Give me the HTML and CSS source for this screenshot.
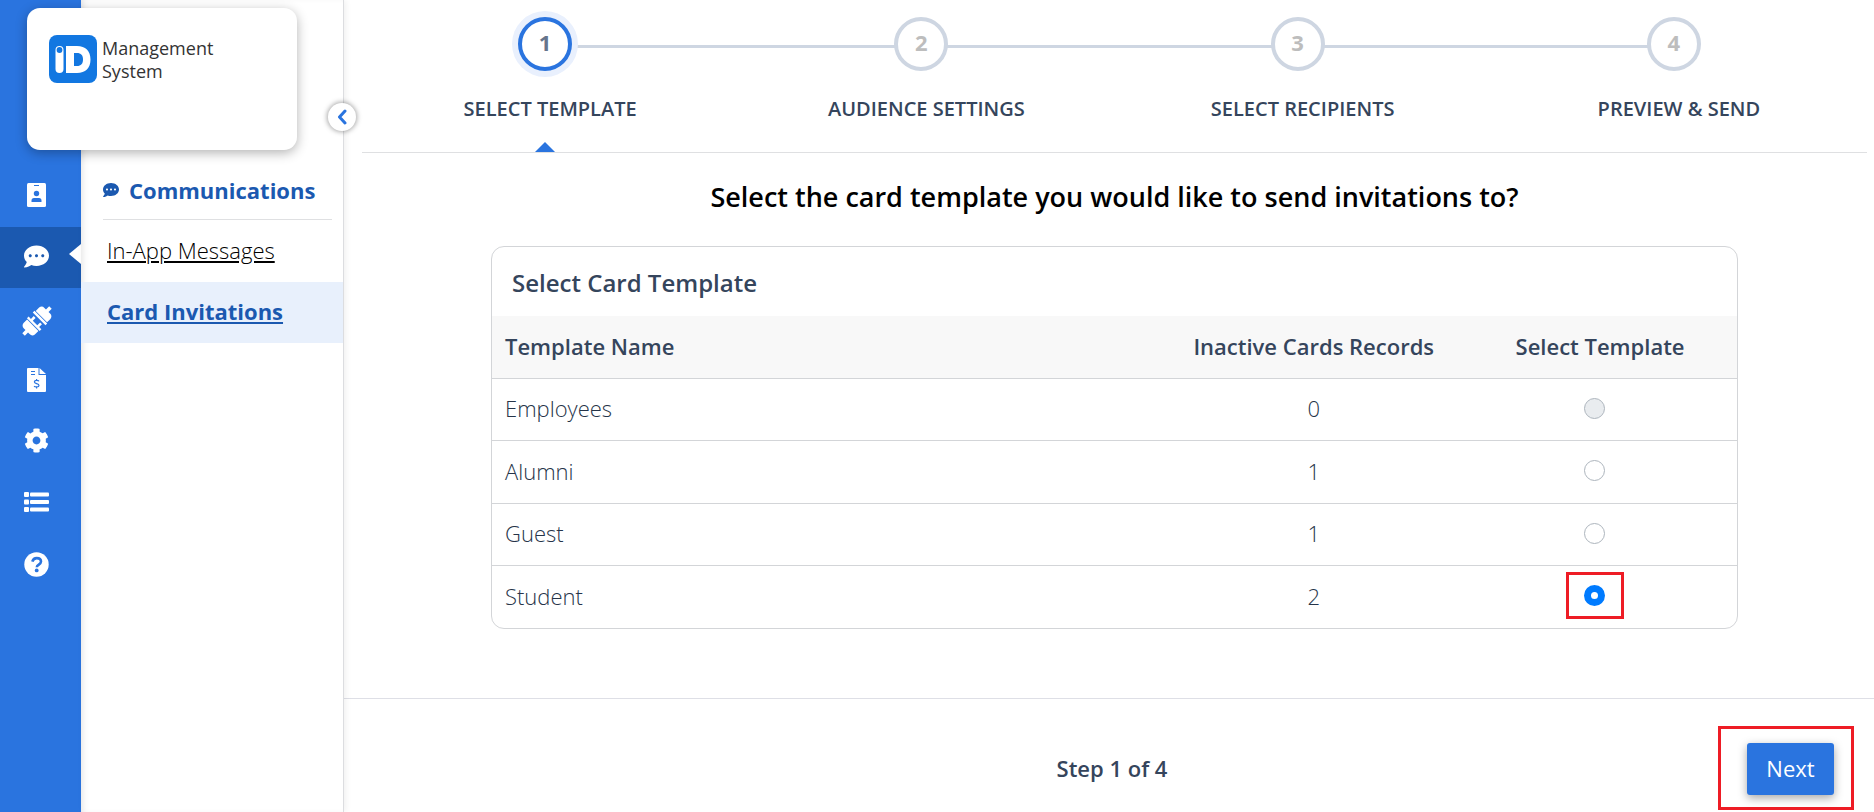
FILE: index.html
```html
<!DOCTYPE html>
<html lang="en">
<head>
<meta charset="utf-8">
<title>Card Invitations</title>
<meta name="viewport" content="width=device-width, initial-scale=1">
<link rel="stylesheet" href="styles.css">
</head>
<body>
<div class="app">
  <nav class="rail" aria-label="Main">
    <a class="rail-item raised" href="#cards" aria-label="Cards">
      <svg width="19" height="24" viewBox="0 0 19 24"><rect width="19" height="24" rx="1.500" fill="currentColor"/><path fill="#2a74df" d="M7 2h5v1H7zM4.500 19v-1.500q0-2.500 2.500-2.500h5q2.500 0 2.500 2.500V19z"/><circle cx="9.500" cy="10.500" r="2.700" fill="#2a74df"/></svg>
    </a>
    <a class="rail-item raised active" href="#communications" aria-label="Communications">
      <svg width="25" height="25" viewBox="0 0 512 512"><path fill="currentColor" d="M256 32C114.600 32 0 125.100 0 240c0 49.600 21.400 95 57 130.700C44.500 421.100 2.700 466 2.200 466.500c-2.200 2.300-2.800 5.700-1.500 8.700S4.800 480 8 480c66.300 0 116-31.800 140.600-51.400 32.700 12.300 69 19.400 107.400 19.400 141.400 0 256-93.100 256-208S397.400 32 256 32zM128 272c-17.700 0-32-14.300-32-32s14.300-32 32-32 32 14.300 32 32-14.300 32-32 32zm128 0c-17.700 0-32-14.300-32-32s14.300-32 32-32 32 14.300 32 32-14.300 32-32 32zm128 0c-17.700 0-32-14.300-32-32s14.300-32 32-32 32 14.300 32 32-14.300 32-32 32z"/></svg>
    </a>
    <a class="rail-item" href="#integrations" aria-label="Integrations">
      <svg width="30" height="34" viewBox="0 -4 30 34"><g transform="rotate(-45 15 15)" fill="currentColor"><path d="M-4 13.200H.500V11q0-3.500 3.500-4h5v16H4q-3.500-.500-3.500-4v-2.200H-4zM9.800 6h2.400v3.200h4v2.600h-4v6.400h4v2.600h-4V24H9.800zM18 6h2.400v18H18zM21.200 7H26q3.500.500 3.500 4v2.200H34v3.600h-4.500V19q0 3.500-3.500 4h-4.800z"/></g></svg>
    </a>
    <a class="rail-item" href="#billing" aria-label="Billing">
      <svg width="19" height="24" viewBox="0 0 19 24"><path fill="currentColor" d="M1 0h10.500v7H19v16q0 1-1 1H1q-1 0-1-1V1q0-1 1-1zM12.500 0 19 6H12.500z"/><path stroke="#2a74df" stroke-width="1.200" fill="none" d="M4 3.500h4M4 6.500h4M12 13.200c-.6-1-4.500-1.400-4.600.7 0 2 4.600 1.400 4.600 3.500 0 2-4.100 1.900-4.900.7M9.600 12.800v-1.700M9.600 20.500v-1.700"/></svg>
    </a>
    <a class="rail-item" href="#settings" aria-label="Settings">
      <svg width="25" height="25" viewBox="0 0 512 512"><path fill="currentColor" d="M487.400 315.700l-42.600-24.600c4.300-23.200 4.300-47 0-70.200l42.600-24.600c4.900-2.800 7.100-8.600 5.500-14-11.100-35.600-30-67.800-54.700-94.600-3.800-4.100-10-5.100-14.800-2.300L380.800 110c-17.900-15.400-38.500-27.300-60.800-35.100V25.800c0-5.600-3.900-10.500-9.400-11.700-36.700-8.200-74.300-7.800-109.200 0-5.500 1.200-9.400 6.100-9.400 11.700V75c-22.200 7.900-42.800 19.800-60.800 35.100L88.700 85.500c-4.900-2.800-11-1.900-14.800 2.300-24.700 26.700-43.600 58.900-54.700 94.600-1.700 5.400.6 11.200 5.500 14L67.300 221c-4.300 23.200-4.300 47 0 70.200l-42.600 24.600c-4.900 2.800-7.100 8.600-5.500 14 11.100 35.600 30 67.800 54.700 94.600 3.800 4.100 10 5.100 14.800 2.300l42.600-24.600c17.900 15.400 38.500 27.300 60.800 35.100v49.200c0 5.600 3.900 10.500 9.400 11.700 36.700 8.200 74.300 7.800 109.200 0 5.500-1.200 9.400-6.100 9.400-11.700v-49.200c22.200-7.900 42.800-19.800 60.800-35.100l42.600 24.600c4.900 2.800 11 1.900 14.800-2.300 24.700-26.700 43.600-58.900 54.700-94.600 1.500-5.500-.7-11.300-5.600-14.100zM256 336c-44.100 0-80-35.900-80-80s35.900-80 80-80 80 35.900 80 80-35.900 80-80 80z"/></svg>
    </a>
    <a class="rail-item" href="#lists" aria-label="Lists">
      <svg width="25" height="20" viewBox="0 0 25 20" fill="currentColor"><rect width="5" height="5" rx="1"/><rect y="7.500" width="5" height="5" rx="1"/><rect y="15" width="5" height="5" rx="1"/><rect x="6" y=".5" width="19" height="4" rx="1"/><rect x="6" y="8" width="19" height="4" rx="1"/><rect x="6" y="15.500" width="19" height="4" rx="1"/></svg>
    </a>
    <a class="rail-item tall" href="#help" aria-label="Help">
      <svg width="25" height="25" viewBox="0 0 25 25"><circle cx="12.500" cy="12.500" r="12.200" fill="currentColor"/><path d="M8.300 9.600c.8-2.500 2.300-3.500 4.400-3.500 2.500 0 4.300 1.400 4.300 3.500 0 3-4.200 2.900-4.200 5.600" fill="none" stroke="#2a74df" stroke-width="2.600"/><circle cx="12.700" cy="18.400" r="1.900" fill="#2a74df"/></svg>
    </a>
  </nav>

  <aside class="panel">
    <h2 class="panel-title">
      <svg width="16" height="16" viewBox="0 0 512 512"><path fill="currentColor" d="M256 32C114.600 32 0 125.100 0 240c0 49.600 21.400 95 57 130.700C44.500 421.100 2.700 466 2.200 466.500c-2.200 2.300-2.800 5.700-1.500 8.700S4.800 480 8 480c66.300 0 116-31.800 140.600-51.400 32.700 12.300 69 19.400 107.400 19.400 141.400 0 256-93.100 256-208S397.400 32 256 32zM128 272c-17.700 0-32-14.300-32-32s14.300-32 32-32 32 14.300 32 32-14.300 32-32 32zm128 0c-17.700 0-32-14.300-32-32s14.300-32 32-32 32 14.300 32 32-14.300 32-32 32zm128 0c-17.700 0-32-14.300-32-32s14.300-32 32-32 32 14.300 32 32-14.300 32-32 32z"/></svg>
      Communications
    </h2>
    <a class="panel-link" href="#messages">In-App Messages</a>
    <a class="panel-link current" href="#invitations">Card Invitations</a>
    <button class="collapse" type="button" aria-label="Collapse menu">
      <svg width="10" height="16" viewBox="0 0 10 16"><path d="M8 2 2.500 8 8 14" fill="none" stroke="currentColor" stroke-width="3" stroke-linecap="round" stroke-linejoin="round"/></svg>
    </button>
  </aside>

  <div class="brand">
    <svg width="48" height="48" viewBox="0 0 48 48"><rect width="48" height="48" rx="8" fill="#1277e1"/><rect x="6.500" y="11" width="8" height="27" rx="4" fill="#fff"/><circle cx="10.500" cy="15" r="2.900" fill="#1277e1"/><path fill="#fff" fill-rule="evenodd" d="M17 11h11c8.500 0 13.500 5 13.500 13.500S36.500 38 28 38H17zM25 18v13h3c4 0 6-2.300 6-6.500S32 18 28 18z"/></svg>
    <span class="brand-name">Management<br>System</span>
  </div>

  <main class="main">
    <ol class="steps">
      <li class="step current" aria-current="step"><span class="dot">1</span><span class="step-label">Select Template</span></li>
      <li class="step"><span class="dot">2</span><span class="step-label">Audience Settings</span></li>
      <li class="step"><span class="dot">3</span><span class="step-label">Select Recipients</span></li>
      <li class="step"><span class="dot">4</span><span class="step-label">Preview &amp; Send</span></li>
    </ol>

    <section class="content">
      <h1 class="question">Select the card template you would like to send invitations to?</h1>
      <div class="card">
        <h2 class="card-title">Select Card Template</h2>
        <table class="templates">
          <thead>
            <tr><th class="name" scope="col">Template Name</th><th class="count" scope="col">Inactive Cards Records</th><th class="pick" scope="col">Select Template</th></tr>
          </thead>
          <tbody>
            <tr><td class="name"><label for="t1">Employees</label></td><td>0</td><td class="choice"><span class="mark"><input id="t1" type="radio" name="template" disabled></span></td></tr>
            <tr><td class="name"><label for="t2">Alumni</label></td><td>1</td><td class="choice"><span class="mark"><input id="t2" type="radio" name="template"></span></td></tr>
            <tr><td class="name"><label for="t3">Guest</label></td><td>1</td><td class="choice"><span class="mark"><input id="t3" type="radio" name="template"></span></td></tr>
            <tr><td class="name"><label for="t4">Student</label></td><td>2</td><td class="choice"><span class="mark outlined"><input id="t4" type="radio" name="template" checked></span></td></tr>
          </tbody>
        </table>
      </div>
    </section>

    <footer class="footer">
      <span class="progress">Step 1 of 4</span>
      <div class="next-frame"><button class="next" type="button">Next</button></div>
    </footer>
  </main>
</div>
</body>
</html>
```
FILE: styles.css
```css
* {
  box-sizing: border-box;
}

body {
  margin: 0;
  font-family: "Open Sans", "Noto Sans", sans-serif;
  font-size: 22px;
  color: #35455c;
  background: #fff;
}

h1,
h2 {
  margin: 0;
}

.app {
  position: relative;
  display: flex;
  min-height: 100vh;
}

.rail {
  flex: none;
  width: 81px;
  padding-top: 166px;
  background: #2a74df;
}

.rail-item {
  position: relative;
  display: flex;
  align-items: center;
  justify-content: center;
  height: 61px;
  padding-right: 8px;
  color: #fff;
}

.rail-item.raised {
  padding-bottom: 3px;
}

.rail-item.tall {
  height: 64px;
}

.rail-item.active {
  background: #1b59b0;
}

.rail-item.active::after {
  content: "";
  position: absolute;
  right: 0;
  top: 17px;
  border: 10px solid transparent;
  border-width: 10px 12px 10px 0;
  border-right-color: #fff;
}

.panel {
  position: relative;
  flex: none;
  width: 263px;
  padding-top: 166px;
  border-right: 1px solid #dcdde0;
  box-shadow: 2px 0 6px rgba(0, 0, 0, 0.06), inset 5px 0 6px -3px rgba(0, 0, 0, 0.1);
}

.panel-title {
  display: flex;
  align-items: center;
  gap: 10px;
  height: 54px;
  margin: 0 11px 1px 22px;
  padding-bottom: 6px;
  border-bottom: 1px solid #dfe0e2;
  font-size: 22px;
  font-weight: 700;
  color: #1b59b0;
}

.panel-link {
  display: flex;
  align-items: center;
  height: 61px;
  padding: 0 0 4px 26px;
  color: #000;
  font-weight: 300;
}

.panel-link.current {
  background: #e8f0fc;
  color: #1b59b0;
  font-weight: 700;
}

.collapse {
  position: absolute;
  top: 103px;
  right: -13px;
  z-index: 2;
  display: grid;
  place-items: center;
  width: 28px;
  height: 28px;
  padding: 0;
  border: 0;
  border-radius: 50%;
  background: #fff;
  color: #2a74df;
  box-shadow: 0 0 5px 1px rgba(0, 0, 0, 0.35);
}

.brand {
  position: absolute;
  top: 8px;
  left: 27px;
  display: flex;
  gap: 5px;
  width: 270px;
  height: 142px;
  padding: 27px 22px;
  border-radius: 13px;
  background: #fff;
  box-shadow: 0 3px 12px rgba(0, 0, 0, 0.3);
}

.brand-name {
  padding-top: 2px;
  font-size: 18px;
  line-height: 23px;
  color: #333;
}

.main {
  flex: 1;
  display: flex;
  flex-direction: column;
  min-width: 0;
}

.steps {
  display: grid;
  grid-template-columns: repeat(4, 1fr);
  margin: 0 7px 0 18px;
  padding: 17px 0 0;
  border-bottom: 1px solid #dfe0e2;
  list-style: none;
}

.step {
  position: relative;
  display: flex;
  flex-direction: column;
  align-items: center;
  height: 135px;
}

.dot {
  display: grid;
  place-items: center;
  width: 54px;
  height: 54px;
  margin-right: 10px;
  padding-bottom: 4px;
  border: 4px solid #ced6e2;
  border-radius: 50%;
  background: #fff;
  font-weight: 700;
  color: #bdbdbd;
  z-index: 1;
}

.step + .step::before {
  content: "";
  position: absolute;
  top: 28px;
  right: 50%;
  width: 100%;
  height: 3px;
  background: #ced6e2;
}

.step.current .dot {
  border-color: #2a74df;
  box-shadow: 0 0 0 6px #e9f0fd;
  color: #66748c;
}

.step.current::after {
  content: "";
  position: absolute;
  bottom: 0;
  left: 50%;
  margin-left: -15px;
  border: 10px solid transparent;
  border-top: 0;
  border-bottom-color: #2a74df;
}

.step-label {
  margin-top: 24px;
  font-size: 20px;
  font-weight: 600;
  line-height: 28px;
  text-transform: uppercase;
}

.content {
  flex: 1;
  padding: 24px 136px 40px 147px;
}

.question {
  font-size: 27px;
  font-weight: 600;
  line-height: 40px;
  text-align: center;
  color: #000;
}

.card {
  margin-top: 29px;
  overflow: hidden;
  border: 1px solid #d3d5d8;
  border-radius: 13px;
}

.card-title {
  padding: 19px 20px 17px;
  font-size: 24px;
  font-weight: 600;
  line-height: 33px;
}

.templates {
  width: 100%;
  table-layout: fixed;
  border-collapse: collapse;
  text-align: center;
}

.templates th,
.templates td {
  height: 62px;
  padding: 0 13px 2px;
  border-top: 1px solid #d3d5d8;
}

.templates th {
  border-top: 0;
  background: #f8f8f8;
  font-weight: 600;
}

.templates td {
  font-weight: 300;
  color: #263449;
}

.templates tbody tr:nth-child(even) td {
  height: 63px;
}

.templates .name {
  text-align: left;
}

.templates .count {
  width: 24%;
}

.templates .pick {
  width: 22%;
}

.templates .choice {
  padding-right: 24px;
}

.mark {
  display: grid;
  place-items: center;
  width: 58px;
  height: 47px;
  margin: 0 auto;
}

.mark.outlined {
  border: 3px solid #ee1c25;
}

.mark input {
  appearance: none;
  width: 21px;
  height: 21px;
  margin: 0;
  border: 1px solid #adb5bd;
  border-radius: 50%;
  background: #fff;
}

.mark input:disabled {
  background: #e9ecef;
}

.mark input:checked {
  border: 7px solid #007bff;
}

.footer {
  display: grid;
  grid-template-columns: 1fr auto 1fr;
  align-items: center;
  padding: 27px 20px 2px 26px;
  border-top: 1px solid #dedfe6;
}

.progress {
  grid-column: 2;
  font-weight: 600;
}

.next-frame {
  justify-self: end;
  padding: 14px 17px 12px 26px;
  border: 3px solid #ee1c25;
}

.next {
  display: block;
  width: 87px;
  height: 52px;
  padding: 0 0 2px;
  border: 0;
  border-radius: 3px;
  background: #2a74df;
  box-shadow: 0 3px 10px rgba(0, 0, 0, 0.35);
  font: inherit;
  color: #fff;
}
```
